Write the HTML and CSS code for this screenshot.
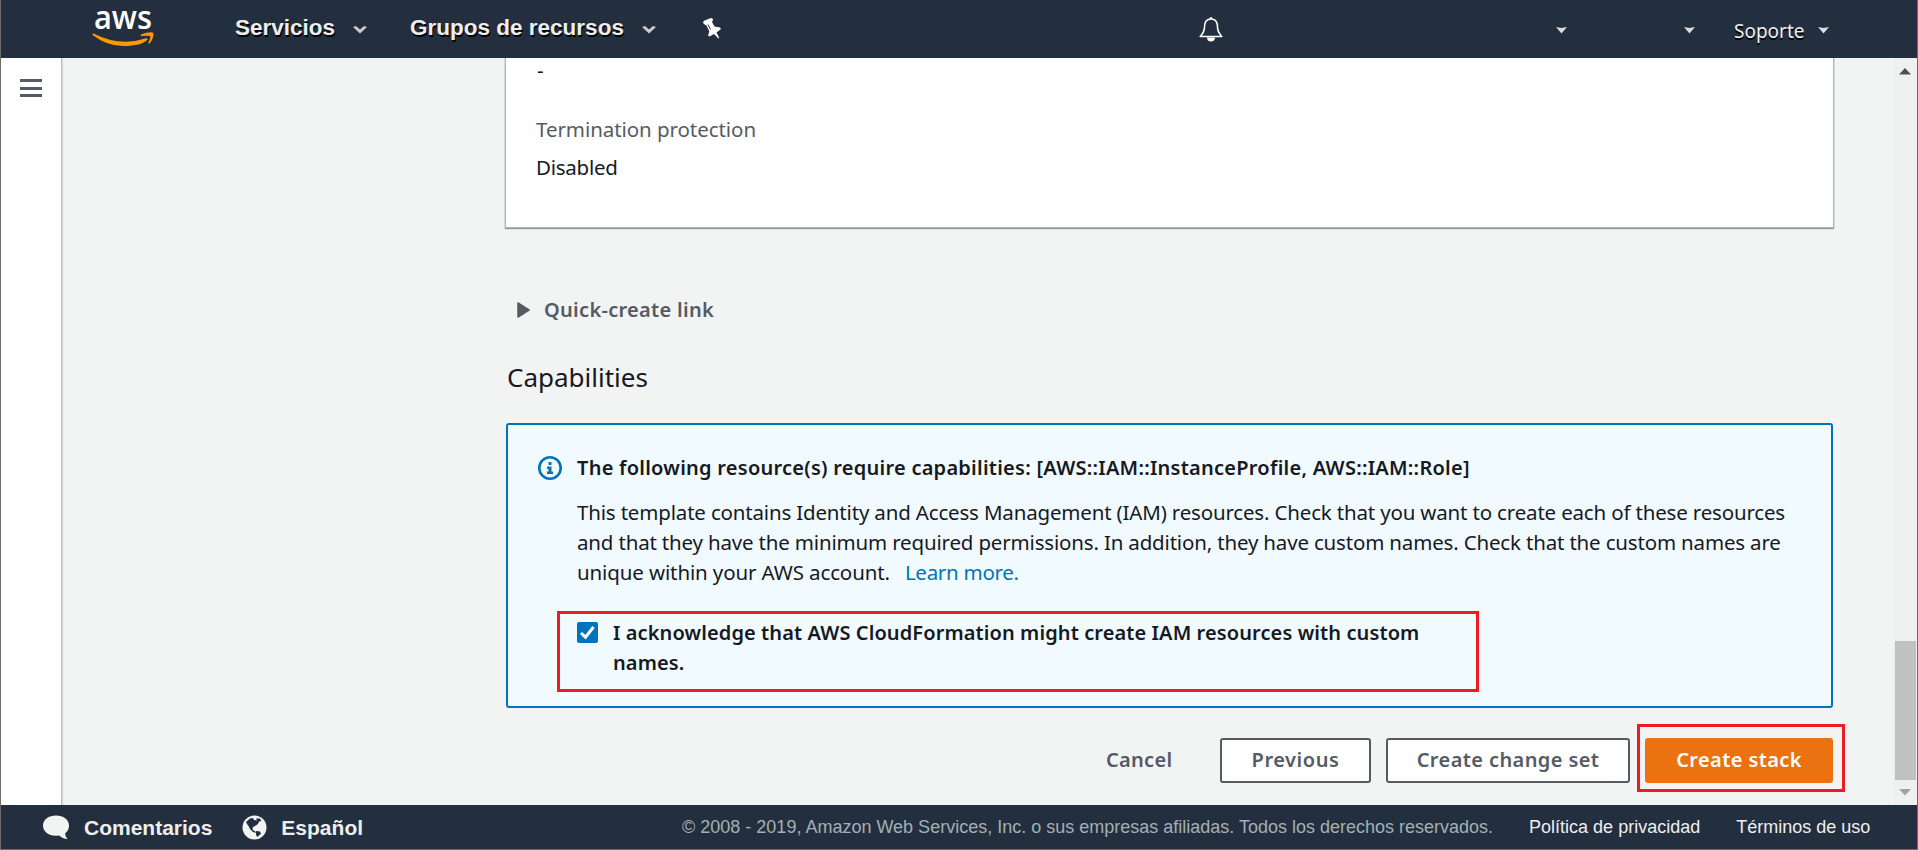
FILE: index.html
```html
<!DOCTYPE html>
<html lang="es">
<head>
<meta charset="utf-8">
<title>Create stack</title>
<link rel="stylesheet" href="styles.css">
</head>
<body>
<div class="app">
  <header class="topbar">
    <svg class="logo" width="64" height="48" viewBox="0 -8 64 48">
      <text class="logo-text" x="2" y="20.500" textLength="58" lengthAdjust="spacingAndGlyphs">aws</text>
      <path fill="#f90" d="M1.500 25.500Q28 39 53 30.500Q56 29.500 55.500 31.500Q50 38 31 38Q15 38 .5 27Q0 25.500 1.500 25.500Z"/>
      <path fill="#f90" d="M49 26.500Q60.500 22.500 61.500 25.500Q61.500 31 57.500 35.500Q56 36 56.500 34.500Q59 29 58 28Q56 27.300 50 28Q48 28 49 26.500Z"/>
    </svg>
    <nav class="nav">
      <span class="nav-item">Servicios</span>
      <svg class="chev" width="14" height="8" viewBox="0 0 14 8"><path d="M0 1 3 0 7 3.500 11 0 14 1 7 7.500Z"/></svg>
      <span class="nav-item">Grupos de recursos</span>
      <svg class="chev" width="14" height="8" viewBox="0 0 14 8"><path d="M0 1 3 0 7 3.500 11 0 14 1 7 7.500Z"/></svg>
      <svg class="pin" width="18" height="21" viewBox="0 0 18 21"><path fill="#fff" d="M0 4 1.500 2.500 8 0 9.500 .5 10 2 9 4 11.500 8.500 17 9.500 18 11 13.500 14.500 16.300 20 15.500 20.500 11 16 6.500 18.500 5 17.500 6.300 13.500 3.500 7.500 .8 6Z"/><path stroke="#232f3e" stroke-width="1" d="M5 6.500 7.500 11.500"/></svg>
    </nav>
    <div class="tools">
      <svg class="bell" width="24" height="26" viewBox="0 0 24 26"><path d="M12 3C7 3 5.500 7 5.500 11 5.500 16 3.500 18 1.200 20.500H22.800C20.500 18 18.500 16 18.500 11 18.500 7 17 3 12 3Z" fill="none" stroke="#fff" stroke-width="1.600" stroke-linejoin="round"/><path d="M10.500 3a1.500 2 0 0 1 3 0zM8 21.500h8a4 4 0 0 1-8 0z" fill="#fff"/></svg>
      <svg class="caret c1" width="11" height="7" viewBox="0 0 11 7"><path d="M0 0 5.500 1 11 0 5.500 6.500Z"/></svg>
      <svg class="caret c2" width="11" height="7" viewBox="0 0 11 7"><path d="M0 0 5.500 1 11 0 5.500 6.500Z"/></svg>
      <span class="support">Soporte</span>
      <svg class="caret c3" width="11" height="7" viewBox="0 0 11 7"><path d="M0 0 5.500 1 11 0 5.500 6.500Z"/></svg>
    </div>
  </header>
  <div class="body">
    <aside class="rail"><div class="burger"><i></i><i></i><i></i></div></aside>
    <main class="main">
      <section class="panel">
        <p class="line dash">-</p>
        <p class="line label">Termination protection</p>
        <p class="line value">Disabled</p>
      </section>
      <div class="expander">
        <svg width="13" height="16" viewBox="0 0 13 16"><path d="M1 1 12 8 1 15Z" fill="#545b64" stroke="#545b64" stroke-width="1.500" stroke-linejoin="round"/></svg>
        <span class="expander-text">Quick-create link</span>
      </div>
      <h2 class="heading">Capabilities</h2>
      <section class="alert">
        <svg class="info" width="24" height="24" viewBox="0 0 24 24"><circle cx="12" cy="12" r="10.700" fill="none" stroke="#0073bb" stroke-width="2.600"/><path fill="#0073bb" d="M10.500 6h3v3h-3zM9 10.500h4.500v5H15V18H9v-2.500h1.500V13H9z"/></svg>
        <div class="alert-body">
          <p class="alert-title">The following resource(s) require capabilities: [AWS::IAM::InstanceProfile, AWS::IAM::Role]</p>
          <p class="alert-text"><span>This template contains Identity and Access Management (IAM) resources. Check that you want to create each of these resources</span><br><span>and that they have the minimum required permissions. In addition, they have custom names. Check that the custom names are</span><br><span class="last">unique within your AWS account.</span><a class="learn">Learn more.</a></p>
          <label class="ack">
            <svg class="check" width="21" height="21" viewBox="0 0 21 21"><rect width="21" height="21" rx="2" fill="#0073bb"/><path d="M4 11 8.500 15.200 16.500 5" fill="none" stroke="#fff" stroke-width="3"/></svg>
            <span class="ack-text">I acknowledge that AWS CloudFormation might create IAM resources with custom<br>names.</span>
          </label>
        </div>
      </section>
      <div class="actions">
        <span class="cancel">Cancel</span>
        <span class="btn b-prev">Previous</span>
        <span class="btn b-change">Create change set</span>
        <span class="primary-mark"><span class="btn b-stack">Create stack</span></span>
      </div>
    </main>
    <div class="scroll">
      <svg width="12" height="7" viewBox="0 0 12 7"><path fill="#505050" d="M0 6.500 6 0 12 6.500Z"/></svg>
      <div class="thumb"></div>
      <svg width="12" height="7" viewBox="0 0 12 7"><path fill="#a3a3a3" d="M0 0 6 6.500 12 0Z"/></svg>
    </div>
  </div>
  <footer class="footer">
    <svg width="27" height="25" viewBox="0 0 28 25"><path fill="#f2f3f3" d="M13.500 0C21 0 27 4 27 10.500 27 14 25.500 16.500 23 18.500 23 21 24 23 25.500 24.500 22 24.500 19 23 17 20.800 7 22.500 0 17.500 0 10.500 0 4 6 0 13.500 0Z"/></svg>
    <span class="f-bold">Comentarios</span>
    <svg class="globe" width="25" height="25" viewBox="0 0 25 25"><circle cx="12.500" cy="12.500" r="12" fill="#f2f3f3"/><path fill="#232f3e" d="M4 7 8 3.500 11 3 12 5 15 5.500 14 3.500 18 3.500 19.500 6 17 6.500 16 9 13 11 11 12 10.500 15 13 16 14 18 11 17 8 14 6.500 11 5 9ZM14 16 18 16.500 19 18.500 15.500 22 14 20Z"/></svg>
    <span class="f-bold">Español</span>
    <span class="copy">© 2008 - 2019, Amazon Web Services, Inc. o sus empresas afiliadas. Todos los derechos reservados.</span>
    <span class="f-link">Política de privacidad</span>
    <span class="f-link">Términos de uso</span>
  </footer>
</div>
</body>
</html>
```
FILE: styles.css
```css
* { box-sizing: border-box; }
body { margin: 0; font-family: "Noto Sans", "Open Sans", sans-serif; font-size: 20px; color: #16191f; }
p, h2 { margin: 0; }
svg { display: block; flex: none; }
span, a, p { white-space: nowrap; }
.app { height: 850px; display: flex; flex-direction: column; overflow: hidden; border: 1px solid #6b6b6b; border-top: 0; background: #f2f3f3; }
.topbar { height: 58px; flex: none; background: #232f3e; display: flex; align-items: flex-start; color: #eee; position: relative; z-index: 1; }
.logo { margin: 0 0 0 91px; overflow: visible; }
.logo-text { font: 600 33px/1 "Open Sans", sans-serif; fill: #fff; }
.nav { display: flex; padding-left: 79px; font: bold 22.500px/26px "Liberation Sans", Arial, sans-serif; text-shadow: 1px 2px 0 #000; }
.nav-item { margin-top: 15px; }
.chev { fill: #ccc; margin: 26px 43px 0 18px; }
.pin { margin: 18px 0 0 4px; }
.tools { margin-left: auto; display: flex; width: 718px; }
.bell { margin-top: 16px; }
.caret { fill: #ddd; margin-top: 27px; }
.c1 { margin-left: 333px; }
.c2 { margin-left: 117px; }
.support { margin: 18px 13px 0 39px; font-size: 19px; line-height: 26px; text-shadow: 0 2px 0 #000; }
.body { flex: 1; display: flex; min-height: 0; }
.rail { width: 61px; background: #fff; border-right: 1px solid #b8bfbf; box-shadow: 1px 0 1px #d5dbdb; padding: 21px 0 0 19px; }
.burger { display: grid; gap: 4.500px; width: 22px; }
.burger i { height: 3px; background: #545b64; }
.main { width: 1341px; flex: none; margin-left: 443px; display: flex; flex-direction: column; }
.panel { height: 169px; margin: 0 0 1px 1px; width: 1327px; background: #fff; padding-left: 30px; box-shadow: 0 0 1px 1px #aab7b8, 0 1px 1px 1px #879596; font-size: 20.500px; }
.line { line-height: 28px; }
.dash { margin-top: -2px; padding-left: 1px; }
.label { color: #545b64; margin-top: 31px; letter-spacing: -0.060px; }
.value { margin-top: 10px; letter-spacing: -0.250px; }
.expander { display: flex; align-items: center; gap: 14px; height: 28px; margin: 68px 0 0 12px; font-weight: 600; color: #545b64; }
.expander-text { margin-top: -2px; letter-spacing: 0.300px; }
.heading { font-weight: 400; font-size: 26px; line-height: 36px; margin: 35px 0 0 2px; }
.alert { width: 1327px; height: 285px; margin: 28px 0 0 1px; border: 2px solid #0073bb; border-radius: 3px; background: #f1faff; display: flex; align-items: flex-start; padding-left: 30px; }
.info { margin: 31px 0 0; }
.alert-body { line-height: 30px; }
.alert-title { margin: 28px 0 0 15px; font-weight: 600; letter-spacing: 0.250px; }
.alert-text { margin: 14px 0 0 15px; font-size: 20.500px; letter-spacing: -0.173px; }
.last { letter-spacing: -0.120px; }
.learn { color: #0073bb; margin-left: 15px; letter-spacing: -0.280px; }
.ack { display: flex; width: 922px; height: 81px; margin: 24px 0 0 -5px; border: 3px solid #ed1c24; padding: 4px 0 0 17px; gap: 15px; font-weight: 600; letter-spacing: 0.100px; }
.check { margin-top: 4px; }
.actions { display: flex; align-items: center; height: 68px; margin-top: 16px; font-weight: 600; color: #545b64; letter-spacing: 0.400px; }
.cancel { margin: 2px 0 0 601px; width: 114px; flex: none; letter-spacing: 0.300px; }
.btn { display: flex; align-items: center; justify-content: center; height: 45px; margin-top: 5px; border: 2px solid #545b64; border-radius: 3px; background: #fff; flex: none; padding-bottom: 2px; }
.b-prev { width: 151px; margin-right: 15px; letter-spacing: 0.550px; }
.b-change { width: 244px; margin-right: 7px; }
.primary-mark { width: 208px; height: 68px; border: 3px solid #ed1c24; padding: 6px 0 0 5px; flex: none; }
.b-stack { width: 188px; border: 0; background: #ec7211; color: #fff; }
.scroll { width: 24px; margin-left: auto; background: #f0f0f0; display: flex; flex-direction: column; align-items: center; padding-top: 10px; }
.thumb { width: 21px; height: 139px; background: #c1c1c1; margin: 566px 0 9px; }
.footer { height: 44px; flex: none; background: #232f3e; display: flex; align-items: center; padding-left: 42px; font: 18px/24px "Liberation Sans", Arial, sans-serif; color: #eee; }
.f-bold { font-weight: bold; font-size: 21px; margin: 2px 0 0 14px; }
.globe { margin-left: 30px; }
.copy { color: #a3afb5; margin-left: 319px; }
.f-link { margin-left: 36px; }
```
